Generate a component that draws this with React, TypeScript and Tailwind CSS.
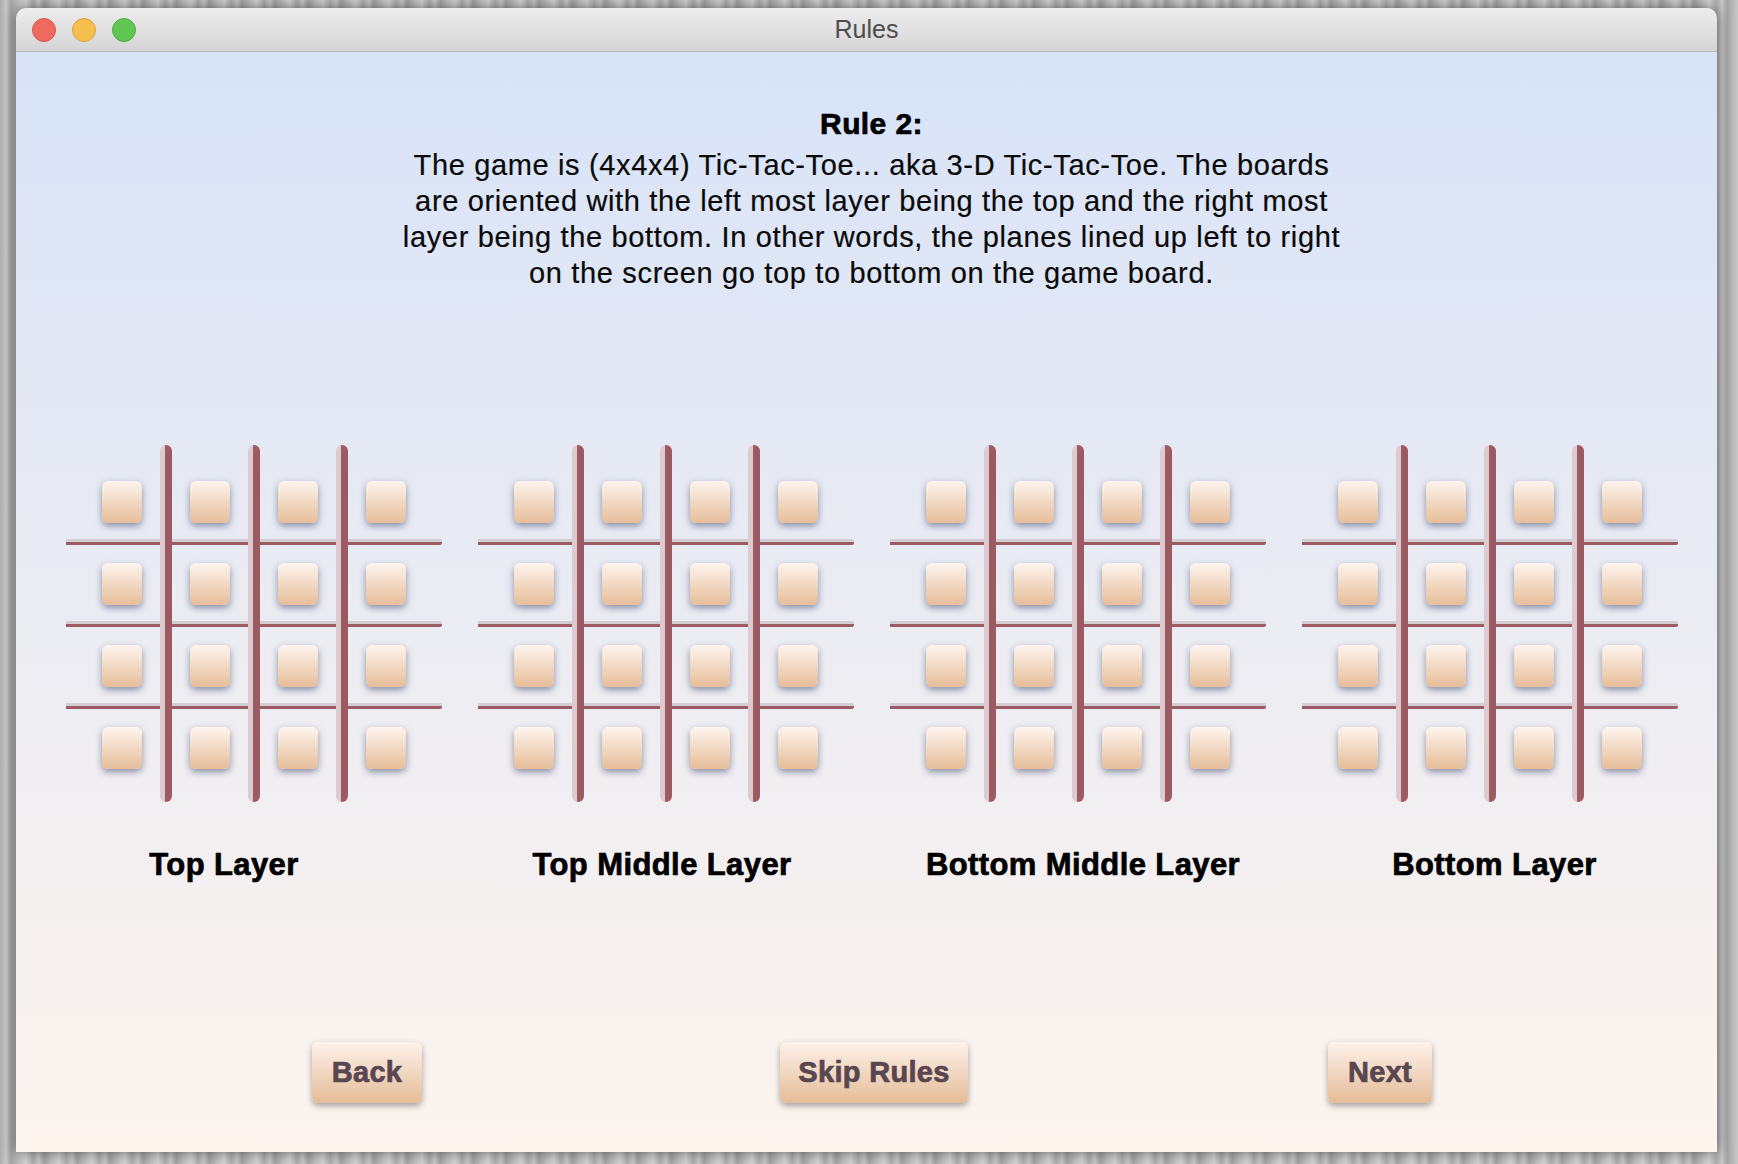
import React from 'react';

const LAYERS = ['Top Layer', 'Top Middle Layer', 'Bottom Middle Layer', 'Bottom Layer'];
// label nudges so the captions sit where the original put them
const LABEL_SHIFT = ['pr-[60px]', 'pr-[8px]', 'pl-[10px]', 'pl-[9px]'];

const HEAVY = "font-['Liberation_Sans',Arial,sans-serif] font-bold [-webkit-text-stroke:0.7px_currentColor]";

function Board() {
  return (
    <div className="relative w-[376px] h-[357px] px-[12px] pt-[16px] pb-[13px]">
      <div className="grid grid-cols-4">
        {Array.from({ length: 16 }).map((_, i) => (
          <div key={i} className="w-[88px] h-[82px] flex items-center justify-center">
            <div className="w-[40px] h-[42px] rounded-[6px] bg-[linear-gradient(to_bottom,#fef4ee,#e6bd99)] shadow-[0_3px_7px_rgba(70,80,115,0.6)]" />
          </div>
        ))}
      </div>

      {/* horizontal bars */}
      {['top-[94px]', 'top-[176px]', 'top-[258px]'].map((t) => (
        <div
          key={t}
          className={`absolute left-0 right-0 ${t} h-[6px] rounded-r-[2px] bg-[linear-gradient(to_bottom,#d3cfd4_50%,#9c5a62_50%)]`}
        />
      ))}

      {/* vertical bars */}
      {['left-[94px]', 'left-[182px]', 'left-[270px]'].map((l) => (
        <div
          key={l}
          className={`absolute top-0 bottom-0 ${l} w-[12px] rounded-[6px] bg-[linear-gradient(to_right,#ddcbcf_44%,#9c5a62_44%)]`}
        />
      ))}
    </div>
  );
}

function NavButton({ label, className }: { label: string; className: string }) {
  return (
    <button
      type="button"
      className={`h-[61px] rounded-[6px] bg-[linear-gradient(to_bottom,#fdf2ea,#e5bc98)] shadow-[0_3px_6px_rgba(40,40,50,0.4)] text-[29px] tracking-[0.3px] text-[#584651] ${HEAVY} ${className}`}
    >
      {label}
    </button>
  );
}

export default function App() {
  return (
    <div className="w-[1738px] h-[1164px] overflow-hidden pt-[8px] pl-[16px] bg-[#b8b8b8] bg-[repeating-linear-gradient(90deg,#adadad_0px,#c8c8c8_6px,#a4a4a4_11px,#c0c0c0_19px,#d4d4d4_26px,#aeaeae_33px)]">
      <div className="w-[1701px] h-[1144px] flex flex-col rounded-t-[10px] overflow-hidden shadow-[0_0_14px_rgba(0,0,0,0.5)]">
        {/* title bar */}
        <div className="relative h-[44px] shrink-0 flex items-center justify-center border-b border-[#b6b6b6] bg-[linear-gradient(to_bottom,#ededed,#d5d5d5)]">
          <div className="absolute left-[16px] top-0 bottom-0 flex items-center gap-[16px]">
            <span className="w-[24px] h-[24px] rounded-full bg-[#ee6a5f] border border-[#d6574c]" />
            <span className="w-[24px] h-[24px] rounded-full bg-[#f6be4f] border border-[#dba23c]" />
            <span className="w-[24px] h-[24px] rounded-full bg-[#62c655] border border-[#4fa940]" />
          </div>
          <span className="text-[25px] text-[#4d4d4d] font-['Liberation_Sans',Arial,sans-serif]">Rules</span>
        </div>

        {/* content */}
        <div className="flex-1 flex flex-col bg-[linear-gradient(to_bottom,#d8e3f8,#fdf4ee)]">
          <div className="pt-[54px] pl-[10px] text-center text-black">
            <h1 className={`text-[30px] leading-[36px] tracking-[0.4px] ${HEAVY}`}>Rule 2:</h1>
            <p className="mt-[5px] text-[29px] leading-[36px] tracking-[0.65px] text-[#0a0a0a] font-['Liberation_Sans',Arial,sans-serif] [-webkit-text-stroke:0.2px_currentColor]">
              The game is (4x4x4) Tic-Tac-Toe... aka 3-D Tic-Tac-Toe. The boards
              <br />
              are oriented with the left most layer being the top and the right most
              <br />
              layer being the bottom. In other words, the planes lined up left to right
              <br />
              on the screen go top to bottom on the game board.
            </p>
          </div>

          <div className="mt-[154px] pl-[50px] flex gap-[36px]">
            {LAYERS.map((name) => (
              <Board key={name} />
            ))}
          </div>

          <div className="mt-[45px] pl-[50px] flex gap-[36px]">
            {LAYERS.map((name, i) => (
              <div
                key={name}
                className={`w-[376px] text-center text-[31px] leading-[36px] tracking-[0.4px] text-black ${HEAVY} ${LABEL_SHIFT[i]}`}
              >
                {name}
              </div>
            ))}
          </div>

          <div className="mt-[159px] flex">
            <NavButton label="Back" className="ml-[296px] w-[110px]" />
            <NavButton label="Skip Rules" className="ml-[358px] w-[188px]" />
            <NavButton label="Next" className="ml-[360px] w-[104px]" />
          </div>
        </div>
      </div>
    </div>
  );
}
